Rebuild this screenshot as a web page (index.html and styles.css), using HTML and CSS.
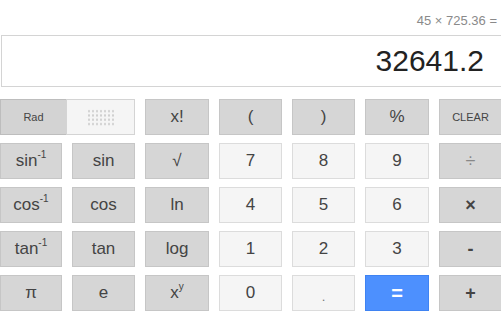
FILE: index.html
```html
<!DOCTYPE html>
<html>
<head>
<meta charset="utf-8">
<link rel="stylesheet" href="styles.css">
</head>
<body>
<div class="calc">
  <div class="history">45 × 725.36 =</div>
  <div class="display">32641.2</div>
  <div class="keys">
    <div class="toggle">
      <div class="tg rad">Rad</div>
      <div class="tg deg"><span class="dots"></span></div>
    </div>
    <div class="key dark">x!</div>
    <div class="key dark">(</div>
    <div class="key dark">)</div>
    <div class="key dark">%</div>
    <div class="key dark small">CLEAR</div>

    <div class="key dark">sin<sup>-1</sup></div>
    <div class="key dark">sin</div>
    <div class="key dark">√</div>
    <div class="key light">7</div>
    <div class="key light">8</div>
    <div class="key light">9</div>
    <div class="key dark op div">÷</div>

    <div class="key dark">cos<sup>-1</sup></div>
    <div class="key dark">cos</div>
    <div class="key dark">ln</div>
    <div class="key light">4</div>
    <div class="key light">5</div>
    <div class="key light">6</div>
    <div class="key dark op">×</div>

    <div class="key dark">tan<sup>-1</sup></div>
    <div class="key dark">tan</div>
    <div class="key dark">log</div>
    <div class="key light">1</div>
    <div class="key light">2</div>
    <div class="key light">3</div>
    <div class="key dark op">-</div>

    <div class="key dark">π</div>
    <div class="key dark">e</div>
    <div class="key dark">x<sup>y</sup></div>
    <div class="key light">0</div>
    <div class="key light dot">.</div>
    <div class="key blue">=</div>
    <div class="key dark op">+</div>
  </div>
</div>
</body>
</html>
```
FILE: styles.css
```css
html, body {
  margin: 0;
  padding: 0;
  background: #fff;
  overflow: hidden;
}
.calc {
  width: 501px;
  font-family: "Liberation Sans", Arial, sans-serif;
}
.history {
  height: 35px;
  box-sizing: border-box;
  padding-top: 6px;
  padding-right: 4px;
  display: flex;
  align-items: center;
  justify-content: flex-end;
  font-size: 13px;
  color: #8a8a8a;
}
.display {
  height: 52px;
  box-sizing: border-box;
  border: 1px solid #d4d4d4;
  margin: 0 -10px 0 1px;
  padding-right: 26px;
  text-align: right;
  font-size: 30px;
  line-height: 50px;
  color: #222;
}
.keys {
  margin-top: 12px;
  display: grid;
  grid-template-columns: 62px 63px 64px 63px 63px 64px 63px;
  grid-auto-rows: 36px;
  column-gap: 10px;
  row-gap: 8px;
}
.key {
  box-sizing: border-box;
  border: 1px solid #c9c9c9;
  display: flex;
  align-items: center;
  justify-content: center;
  font-size: 17px;
  color: #444;
}
.key.dark {
  background: #d6d6d6;
  border-color: #c6c6c6;
}
.key.light {
  background: #f5f5f5;
  border-color: #dcdcdc;
}
.key.blue {
  background: #4d90fe;
  border-color: #3f83f2;
  color: #fff;
  font-weight: bold;
  font-size: 20px;
}
.key.small {
  font-size: 11px;
  color: #444;
}
.key.op {
  font-weight: bold;
  font-size: 18px;
  color: #444;
}
.key.op.div {
  font-weight: normal;
  color: #888;
}
.key.dot {
  color: #777;
  font-size: 13px;
  padding-top: 6px;
}
.key sup {
  font-size: 10px;
  vertical-align: 0;
  position: relative;
  top: -7px;
}
.toggle {
  grid-column: span 2;
  display: flex;
}
.tg {
  box-sizing: border-box;
  height: 36px;
  display: flex;
  align-items: center;
  justify-content: center;
}
.tg.rad {
  width: 66px;
  background: #d3d3d3;
  border: 1px solid #bdbdbd;
  border-right: none;
  font-size: 11px;
  color: #444;
}
.tg.deg {
  width: 69px;
  background: #f5f5f5;
  border: 1px solid #d4d4d4;
}
.dots {
  display: block;
  width: 28px;
  height: 17px;
  background-image: radial-gradient(circle, #cfcfcf 0.9px, transparent 1.2px);
  background-size: 4px 4.3px;
}
```
